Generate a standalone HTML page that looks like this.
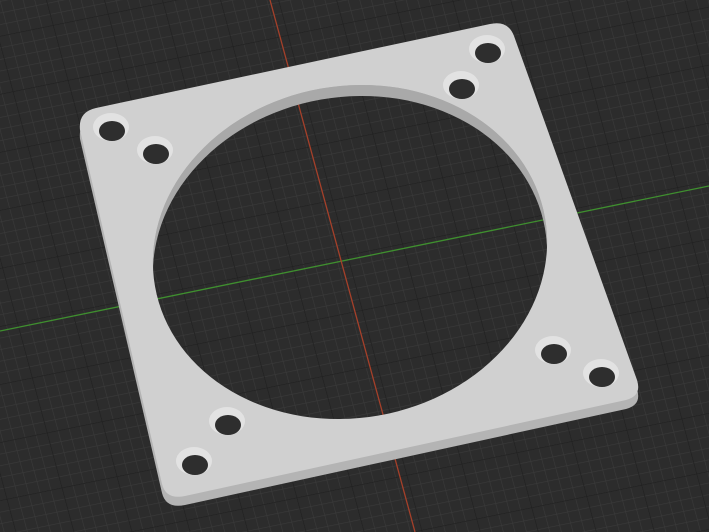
<!DOCTYPE html>
<html><head><style>html,body{margin:0;padding:0;background:#2c2c2c;overflow:hidden;width:709px;height:532px}svg{display:block}</style></head>
<body>
<svg width="709" height="532" viewBox="0 0 709 532" xmlns="http://www.w3.org/2000/svg">
<defs>
<pattern id="minor" width="11" height="11" patternUnits="userSpaceOnUse">
<path d="M0 0H11M0 0V11" stroke="#3a3a3a" stroke-width="1.2" fill="none"/>
</pattern>
<pattern id="major" width="55" height="55" patternUnits="userSpaceOnUse">
<path d="M0 0H55M0 0V55" stroke="#1f1f1f" stroke-width="1.5" fill="none"/>
</pattern>
<mask id="hole">
<rect width="709" height="532" fill="#fff"/>
<ellipse cx="350" cy="252" rx="198" ry="166" transform="rotate(-10 350 252)" fill="#000"/>
</mask>
<clipPath id="hc"><ellipse cx="350" cy="252" rx="198" ry="166" transform="rotate(-10 350 252)"/></clipPath>
<mask id="wall">
<rect width="709" height="532" fill="#fff"/>
<ellipse cx="350" cy="263" rx="198" ry="166" transform="rotate(-10 350 263)" fill="#000"/>
</mask>
</defs>
<rect width="709" height="532" fill="#2c2c2c"/>
<g transform="matrix(1,-0.205,0.27,1,347,255)">
<rect x="-1200" y="-1200" width="2400" height="2400" fill="url(#minor)"/>
<rect x="-1200" y="-1200" width="2400" height="2400" fill="url(#major)"/>
</g>
<line x1="0" y1="331" x2="709" y2="186" stroke="#3f8f2f" stroke-width="1.3"/>
<line x1="270" y1="0" x2="415" y2="532" stroke="#a5402a" stroke-width="1.3"/>
<path d="M80 130 Q78 112 96 108 L490 24 Q508 20 514 36 L637 380 Q642 396 626 400 L185 496 Q166 500 162 484 Z" transform="translate(0,9)" fill="#b4b4b4" mask="url(#hole)"/>
<path d="M80 130 Q78 112 96 108 L490 24 Q508 20 514 36 L637 380 Q642 396 626 400 L185 496 Q166 500 162 484 Z" fill="#d0d0d0" mask="url(#hole)"/>
<g clip-path="url(#hc)"><rect width="709" height="532" fill="#a9a9a9" mask="url(#wall)"/></g>
<g fill="#e2e2e2">
<ellipse cx="111" cy="127" rx="18" ry="14"/><ellipse cx="155" cy="150" rx="18" ry="14"/>
<ellipse cx="487" cy="49" rx="18" ry="14"/><ellipse cx="461" cy="85" rx="18" ry="14"/>
<ellipse cx="553" cy="350" rx="18" ry="14"/><ellipse cx="601" cy="373" rx="18" ry="14"/>
<ellipse cx="227" cy="421" rx="18" ry="14"/><ellipse cx="194" cy="461" rx="18" ry="14"/>
</g>
<g fill="#2e2e2e">
<ellipse cx="112" cy="131" rx="13" ry="10"/><ellipse cx="156" cy="154" rx="13" ry="10"/>
<ellipse cx="488" cy="53" rx="13" ry="10"/><ellipse cx="462" cy="89" rx="13" ry="10"/>
<ellipse cx="554" cy="354" rx="13" ry="10"/><ellipse cx="602" cy="377" rx="13" ry="10"/>
<ellipse cx="228" cy="425" rx="13" ry="10"/><ellipse cx="195" cy="465" rx="13" ry="10"/>
</g>
</svg>
</body></html>
